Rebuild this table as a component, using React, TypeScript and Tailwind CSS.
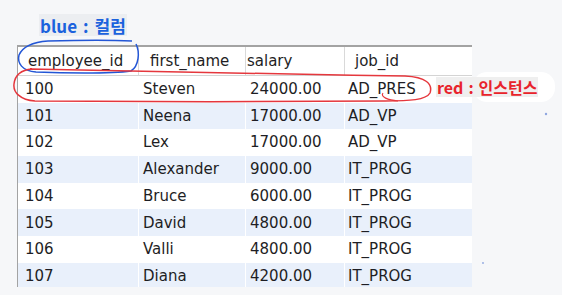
const rows = [
  { id: "100", name: "Steven", salary: "24000.00", job: "AD_PRES" },
  { id: "101", name: "Neena", salary: "17000.00", job: "AD_VP" },
  { id: "102", name: "Lex", salary: "17000.00", job: "AD_VP" },
  { id: "103", name: "Alexander", salary: "9000.00", job: "IT_PROG" },
  { id: "104", name: "Bruce", salary: "6000.00", job: "IT_PROG" },
  { id: "105", name: "David", salary: "4800.00", job: "IT_PROG" },
  { id: "106", name: "Valli", salary: "4800.00", job: "IT_PROG" },
  { id: "107", name: "Diana", salary: "4200.00", job: "IT_PROG" },
]

const cols = "grid grid-cols-[120px_106px_98px_127px] gap-x-px"

export default function App() {
  return (
    <div className="relative h-[295px] w-[562px] overflow-hidden bg-[#f6f7f9] pt-[14px] font-['DejaVu_Sans',sans-serif] text-[15px] text-[#1e1e24]">
      <div className="ml-[39px] inline-flex h-[22px] items-center whitespace-nowrap bg-[#eceef1] px-px font-['Noto_Sans_CJK_KR',sans-serif] text-[17px] font-bold leading-none text-[#1b62dd]">
        <span>blue</span>
        <span className="mx-[6px]">:</span>
        <span>컬럼</span>
      </div>

      <div className="ml-[17px] mt-[6px] h-[242px] w-[455px] overflow-hidden border-l border-t-2 border-[#a3a3a3] bg-white">
        <div className={`${cols} h-[29px] border-b border-r border-[#d4d4d4] bg-[#d9d9d9]`}>
          <div className="flex items-center bg-white pl-[10px]">employee_id</div>
          <div className="flex items-center bg-white pl-[11px]">first_name</div>
          <div className="flex items-center bg-white pl-[1px]">salary</div>
          <div className="flex items-center bg-white pl-[10px]">job_id</div>
        </div>
        {rows.map((r, i) => (
          <div key={r.id} className={`${cols} h-[26.7px] bg-white`}>
            {[r.id, r.name, r.salary, r.job].map((v, j) => (
              <div
                key={j}
                className={`flex items-center ${i % 2 === 1 ? "bg-[#e9f0fb]" : "bg-white"} ${j === 0 ? "pl-[7px]" : j === 3 ? "pl-[3px]" : "pl-[4px]"}`}
              >
                {v}
              </div>
            ))}
          </div>
        ))}
      </div>

      <div className="absolute left-[473px] top-[72px] h-[30px] w-[82px] rounded-[14px] bg-white" />
      <div className="absolute left-[436px] top-[77px] flex h-[20px] items-center whitespace-nowrap bg-[#efefef] px-px font-['Noto_Sans_CJK_KR',sans-serif] text-[16px] font-bold leading-none text-[#e8232b]">
        <span>red</span>
        <span className="mx-[5px]">:</span>
        <span>인스턴스</span>
      </div>

      <svg className="pointer-events-none absolute left-0 top-0" width="562" height="295" viewBox="0 0 562 295" fill="none">
        <path
          d="M136 44 C140 52, 139 66, 131 71 C110 74, 60 73, 36 72 C22 71, 17 63, 19 55 C23 46, 34 42, 48 41 C80 40, 115 40, 132 41"
          stroke="#2356d6"
          strokeWidth="1.5"
        />
        <path
          d="M30 69 C80 71, 250 74, 405 76 C426 77, 433 84, 430 93 C426 100, 410 101, 385 101 C300 102, 120 102, 35 101 C20 100, 13 92, 14 84 C15 75, 20 70, 32 69"
          stroke="#e5373d"
          strokeWidth="1.5"
        />
        <path d="M398 101 C388 100, 380 97, 383 93" stroke="#e5373d" strokeWidth="1.2" />
        <circle cx="546" cy="114" r="1.2" fill="#8fa6e0" />
        <circle cx="483" cy="263" r="0.9" fill="#8fa6e0" />
      </svg>
    </div>
  )
}
